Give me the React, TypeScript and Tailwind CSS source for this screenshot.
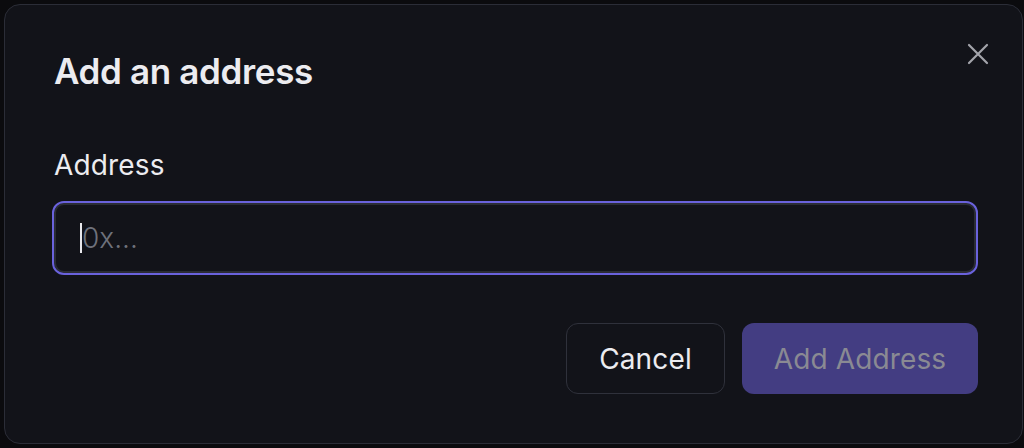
export default function App() {
  return (
    <div className="h-[448px] w-[1024px] bg-[#0b0b0e] pl-[4px] pt-[4px] font-['Inter',sans-serif]">
      <div className="relative flex h-[440px] w-[1019px] flex-col rounded-[16px] border border-[#2b2d37] bg-[#121319] pl-[49px] pr-[44px] pt-[46px]">
        <button className="absolute right-[32px] top-[37px] text-[#a3a4ab]">
          <svg width="24" height="24" viewBox="0 0 24 24" fill="none" stroke="currentColor" strokeWidth="2.2" strokeLinecap="round">
            <path d="M3 3L21 21M21 3L3 21" />
          </svg>
        </button>
        <h2 className="text-[35px] font-semibold leading-[40px] tracking-[-0.01em] text-[#ececf0]">Add an address</h2>
        <label className="mt-[58px] text-[28px] font-normal leading-[32px] tracking-[0.005em] text-[#ececf0]">Address</label>
        <div className="-ml-[2px] mt-[20px] flex h-[74px] items-center rounded-[12px] border-2 border-[#6a62dc] bg-[#121319] px-[26px] shadow-[inset_0_0_0_2px_#2a2c34]">
          <span className="h-[30px] w-[2px] bg-[#e8e8ec]" />
          <span className="text-[28px] font-light text-[#6e717b]">0x...</span>
        </div>
        <div className="mt-[48px] flex justify-end gap-[17px]">
          <button className="h-[71px] w-[159px] rounded-[12px] border border-[#2f313b] text-[28px] font-normal tracking-[0.005em] text-[#ececf0]">Cancel</button>
          <button className="h-[71px] w-[236px] rounded-[12px] bg-[#433d82] text-[28px] font-normal tracking-[0.005em] text-[#8a8a93]">Add Address</button>
        </div>
      </div>
    </div>
  )
}
